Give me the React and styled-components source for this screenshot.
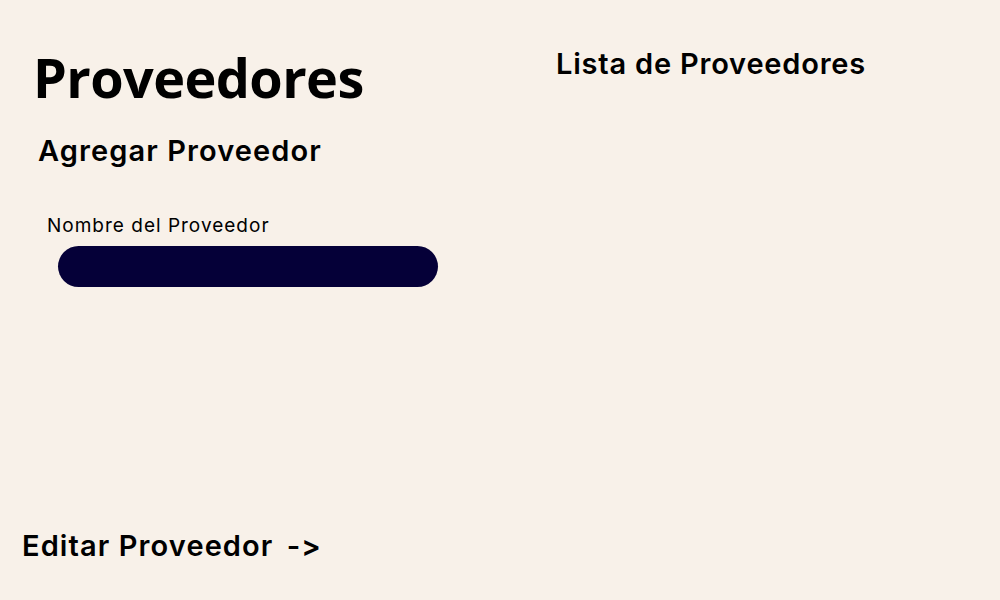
import React from "react";
import styled, { createGlobalStyle } from "styled-components";

const GlobalStyle = createGlobalStyle`
  html, body {
    margin: 0;
    padding: 0;
    background: #f8f1e9;
  }
  body {
    font-family: "Inter", "Noto Sans", sans-serif;
    font-feature-settings: "calt" 0, "liga" 0;
    color: #000;
  }
`;

function App() {
  return (
    <>
      <GlobalStyle />
      <Page>
        <Columns>
          <LeftColumn>
            <Title>Proveedores</Title>
            <SectionTitle>Agregar Proveedor</SectionTitle>
            <Field>
              <Label htmlFor="nombre">Nombre del Proveedor</Label>
              <Input id="nombre" type="text" />
            </Field>
          </LeftColumn>
          <RightColumn>
            <ListTitle>Lista de Proveedores</ListTitle>
          </RightColumn>
        </Columns>
        <EditLink href="#">
          Editar Proveedor <Arrow>-&gt;</Arrow>
        </EditLink>
      </Page>
    </>
  );
}

export default App;

const Page = styled.div`
  height: 600px;
  display: flex;
  flex-direction: column;
  justify-content: space-between;
  box-sizing: border-box;
  padding: 0 0 36px 22px;
`;

const Columns = styled.div`
  display: grid;
  grid-template-columns: 534px 1fr;
`;

const LeftColumn = styled.div`
  display: flex;
  flex-direction: column;
`;

const RightColumn = styled.div`
  padding-top: 46px;
`;

const Title = styled.h1`
  margin: 42px 0 0 11px;
  font-family: "Open Sans", "Noto Sans", sans-serif;
  font-weight: 700;
  font-size: 54px;
  letter-spacing: -0.6px;
  line-height: 70px;
`;

const SectionTitle = styled.h2`
  margin: 21px 0 0 16px;
  font-weight: 600;
  font-size: 29px;
  letter-spacing: 1.1px;
  line-height: 36px;
`;

const Field = styled.div`
  display: flex;
  flex-direction: column;
  margin: 45px 0 0 25px;
`;

const Label = styled.label`
  font-size: 19px;
  letter-spacing: 1px;
  line-height: 24px;
`;

const Input = styled.input`
  margin: 8px 0 0 11px;
  width: 380px;
  height: 41px;
  box-sizing: border-box;
  border: none;
  border-radius: 21px;
  background: #050038;
  color: #fff;
  padding: 0 18px;
  font-size: 16px;
  outline: none;
`;

const ListTitle = styled.h2`
  margin: 0;
  font-weight: 600;
  font-size: 29px;
  letter-spacing: 0.8px;
  line-height: 36px;
`;

const EditLink = styled.a`
  font-weight: 600;
  font-size: 29px;
  letter-spacing: 1.1px;
  line-height: 36px;
  color: #000;
  text-decoration: none;
`;

const Arrow = styled.span`
  margin-left: 5px;
  letter-spacing: 1px;
`;
